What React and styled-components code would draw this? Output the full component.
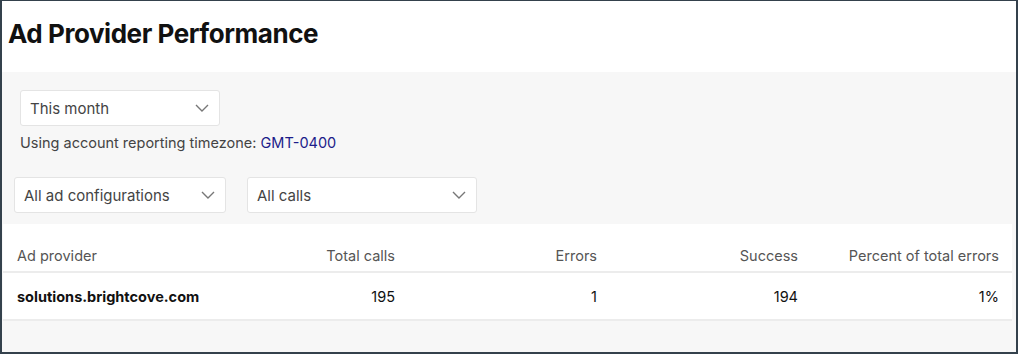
import styled, { createGlobalStyle } from 'styled-components';

const Global = createGlobalStyle`
  html, body { margin: 0; padding: 0; background: #fff; }
  * { box-sizing: border-box; }
  body { font-family: Inter, "Liberation Sans", sans-serif; }
`;

const Frame = styled.div`
  width: 1018px;
  height: 354px;
  border-style: solid;
  border-color: #34414c;
  border-width: 1px 2px 2px 2px;
  display: flex;
  flex-direction: column;
  overflow: hidden;
`;

const Header = styled.div`
  height: 71px;
  background: #fff;
  padding: 17px 0 0 6px;
`;

const Title = styled.h1`
  margin: 0;
  font-size: 26px;
  line-height: 32px;
  font-weight: 700;
  color: #111;
  letter-spacing: -0.45px;
`;

const Body = styled.div`
  flex: 1;
  background: #f7f7f7;
  padding-top: 18px;
`;

const Filters = styled.div`
  padding-left: 18px;
`;

const Note = styled.div`
  margin-top: 8px;
  font-size: 14.5px;
  color: #444;
  a { color: #1c1c8a; text-decoration: none; }
`;

const Row = styled.div`
  display: flex;
  gap: 21px;
  padding-left: 12px;
  margin-top: 26px;
`;

const Select = styled.div`
  width: ${p => p.$w}px;
  height: 36px;
  background: #fff;
  border: 1px solid #e4e4e4;
  border-radius: 3px;
  display: flex;
  align-items: center;
  justify-content: space-between;
  padding: 0 10px 0 9px;
  font-size: 15px;
  color: #444;
`;

const Chevron = () => (
  <svg width="14" height="8" viewBox="0 0 14 8" fill="none">
    <path d="M1 1l6 6 6-6" stroke="#777" strokeWidth="1.4" />
  </svg>
);

const Table = styled.table`
  margin: 11px 4px 0 1px;
  width: calc(100% - 5px);
  background: #fff;
  border-collapse: collapse;
  font-size: 14.5px;
`;

const Th = styled.th`
  height: 48px;
  padding: 22px ${p => (p.$left ? '0 6px 14px' : '13px 6px 0')};
  text-align: ${p => (p.$left ? 'left' : 'right')};
  font-weight: 400;
  color: #555;
  border-bottom: 2px solid #ececec;
  width: ${p => p.$w || 'auto'};
`;

const Td = styled.td`
  height: 48px;
  padding: 0 ${p => (p.$left ? '0 0 14px' : '13px 0 0')};
  text-align: ${p => (p.$left ? 'left' : 'right')};
  font-weight: ${p => (p.$bold ? 700 : 400)};
  color: #111;
  border-bottom: 2px solid #ececec;
`;

export default function App() {
  return (
    <>
      <Global />
      <Frame>
        <Header>
          <Title>Ad Provider Performance</Title>
        </Header>
        <Body>
          <Filters>
            <Select $w={200}>
              This month
              <Chevron />
            </Select>
            <Note>
              Using account reporting timezone: <a href="#">GMT-0400</a>
            </Note>
          </Filters>
          <Row>
            <Select $w={212}>
              All ad configurations
              <Chevron />
            </Select>
            <Select $w={230}>
              All calls
              <Chevron />
            </Select>
          </Row>
          <Table>
            <thead>
              <tr>
                <Th $left>Ad provider</Th>
                <Th $w="200px">Total calls</Th>
                <Th $w="202px">Errors</Th>
                <Th $w="201px">Success</Th>
                <Th $w="201px">Percent of total errors</Th>
              </tr>
            </thead>
            <tbody>
              <tr>
                <Td $left $bold>solutions.brightcove.com</Td>
                <Td>195</Td>
                <Td>1</Td>
                <Td>194</Td>
                <Td>1%</Td>
              </tr>
            </tbody>
          </Table>
        </Body>
      </Frame>
    </>
  );
}
